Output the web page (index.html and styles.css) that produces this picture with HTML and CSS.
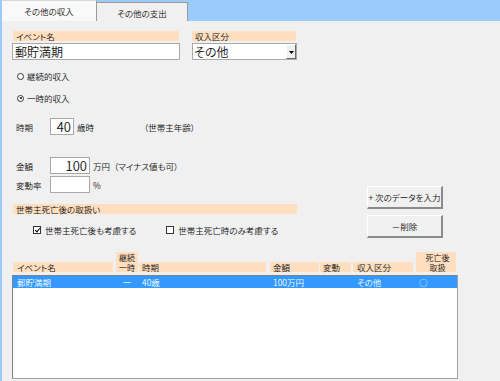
FILE: index.html
```html
<!DOCTYPE html>
<html lang="ja">
<head>
    <meta charset="UTF-8">
    <title>その他の収入</title>
    <link rel="stylesheet" href="styles.css">
</head>
<body>
    <div class="tabs">
        <div class="tab active">その他の収入</div>
        <div class="tab">その他の支出</div>
    </div>
    <div class="panel">
        <div class="head-row">
            <div class="field name">
                <div class="cap">イベント名</div>
                <div class="textbox">郵貯満期</div>
            </div>
            <div class="field kind">
                <div class="cap">収入区分</div>
                <div class="combo">
                    <span class="combo-text">その他</span>
                    <span class="combo-btn">
                        <svg width="5" height="4" viewBox="0 0 5 4"><path d="M0 1h5L2.5 4z" fill="#000"/></svg>
                    </span>
                </div>
            </div>
        </div>

        <div class="opt first"><span class="radio"></span>継続的収入</div>
        <div class="opt second"><span class="radio on"></span>一時的収入</div>

        <div class="row jiki">
            <span class="lbl">時期</span>
            <span class="num w24">40</span>
            <span class="unit">歳時</span>
            <span class="note">（世帯主年齢）</span>
        </div>

        <div class="mid">
            <div class="mid-left">
                <div class="row kingaku">
                    <span class="lbl">金額</span>
                    <span class="num w40">100</span>
                    <span class="unit">万円</span>
                    <span class="note2">（マイナス値も可）</span>
                </div>
                <div class="row hendo">
                    <span class="lbl">変動率</span>
                    <span class="num w40"></span>
                    <span class="unit">%</span>
                </div>
                <div class="bar">世帯主死亡後の取扱い</div>
                <div class="checks">
                    <span class="chk"><span class="box on"></span>世帯主死亡後も考慮する</span>
                    <span class="chk second"><span class="box"></span>世帯主死亡時のみ考慮する</span>
                </div>
            </div>
            <div class="mid-right">
                <div class="btn">+ 次のデータを入力</div>
                <div class="btn">－削除</div>
            </div>
        </div>

        <div class="list-head">
            <div class="c c1 hc">イベント名</div>
            <div class="c c2 hc tall">継続<br>一時</div>
            <div class="c c3 hc">時期</div>
            <div class="c c4 hc">金額</div>
            <div class="c c5 hc">変動</div>
            <div class="c c6 hc">収入区分</div>
            <div class="c c7 hc tall">死亡後<br>取扱</div>
        </div>
        <div class="list">
            <div class="item selected">
                <div class="c c1">郵貯満期</div>
                <div class="c c2 mid-c">一</div>
                <div class="c c3">40歳</div>
                <div class="c c4">100万円</div>
                <div class="c c5"></div>
                <div class="c c6">その他</div>
                <div class="c c7">○</div>
            </div>
        </div>
    </div>
</body>
</html>
```

FILE: styles.css
```css
* {
    box-sizing: border-box;
    margin: 0;
    padding: 0;
}
body {
    width: 500px;
    height: 381px;
    overflow: hidden;
    background-color: #9bcbfb;
    font-family: "Noto Sans CJK JP", sans-serif;
    font-size: 8.5px;
    font-weight: 350;
    color: #111;
    font-feature-settings: "palt";
}
.tabs {
    display: flex;
    align-items: flex-end;
    height: 21px;
    padding-left: 2px;
}
.tab {
    width: 91px;
    height: 19px;
    background-color: #f0f0f0;
    border: 1px solid #9a9a9a;
    border-bottom: none;
    border-left: none;
    display: flex;
    align-items: center;
    justify-content: center;
    padding-top: 1px;
}
.tab.active {
    width: 95px;
    height: 21px;
    background-color: #f9f9f9;
    border-top-color: #d8d8d8;
    padding-top: 0;
}
.panel {
    margin-left: 2px;
    height: 360px;
    background-color: #f0f0f0;
    padding: 10px 0 0 11px;
}
.head-row {
    display: flex;
    gap: 13px;
}
.name { width: 166px; }
.kind { width: 104px; }
.cap {
    height: 10px;
    line-height: 10px;
    background-color: #ffdfbf;
    padding-left: 3px;
}
.textbox {
    margin-top: 2px;
    margin-left: -1px;
    width: 168px;
    height: 17px;
    border: 1px solid #a9a9a9;
    background-color: #fff;
    font-size: 12px;
    line-height: 15px;
    padding-left: 2px;
}
.combo {
    margin-top: 2px;
    width: 105px;
    height: 17px;
    border: 1px solid #a9a9a9;
    background-color: #fff;
    display: flex;
}
.combo-text {
    flex: 1;
    font-size: 12px;
    line-height: 15px;
    padding-left: 1px;
}
.combo-btn {
    width: 10px;
    background-color: #f0f0f0;
    border-left: 1px solid #fff;
    border-top: 1px solid #fff;
    border-right: 1px solid #696969;
    border-bottom: 1px solid #696969;
    display: flex;
    align-items: center;
    justify-content: center;
}
.opt {
    display: flex;
    align-items: center;
    gap: 3px;
    height: 10px;
    padding-left: 4px;
}
.opt.first { margin-top: 11px; }
.opt.second { margin-top: 12px; }
.radio {
    width: 7px;
    height: 7px;
    border: 1px solid #333;
    border-radius: 50%;
    background-color: #fff;
    position: relative;
}
.radio.on::after {
    content: "";
    position: absolute;
    left: 1.5px;
    top: 1.5px;
    width: 2px;
    height: 2px;
    border-radius: 50%;
    background-color: #000;
}
.row {
    display: flex;
    align-items: center;
    height: 17px;
}
.row.jiki { margin-top: 15px; }
.lbl {
    width: 37px;
    padding-left: 3px;
}
.num {
    height: 17px;
    border: 1px solid #a9a9a9;
    background-color: #fff;
    text-align: right;
    font-size: 13px;
    line-height: 15px;
    padding-right: 2px;
}
.w24 { width: 24px; }
.w40 { width: 40px; }
.unit { margin-left: 3px; }
.note { margin-left: 50px; }
.note2 { margin-left: 4px; }
.mid {
    display: flex;
    margin-top: 22px;
}
.mid-left { width: 284px; }
.row.hendo { margin-top: 2px; }
.bar {
    margin-top: 11px;
    height: 10px;
    line-height: 10px;
    background-color: #ffdfbf;
    padding-left: 3px;
}
.checks {
    display: flex;
    margin-top: 11px;
    height: 10px;
    padding-left: 20px;
}
.chk {
    display: flex;
    align-items: center;
    gap: 4px;
}
.chk.second { margin-left: 30px; }
.box {
    width: 8px;
    height: 8px;
    border: 1px solid #333;
    background-color: #fff;
    position: relative;
}
.box.on::after {
    content: "";
    position: absolute;
    left: 1.5px;
    top: 0;
    width: 2px;
    height: 4px;
    border-right: 1px solid #000;
    border-bottom: 1px solid #000;
    transform: rotate(40deg);
}
.mid-right {
    margin-left: 70px;
    padding-top: 29px;
    display: flex;
    flex-direction: column;
    gap: 6px;
}
.btn {
    width: 76px;
    height: 23px;
    background-color: #f0f0f0;
    border-top: 1px solid #fff;
    border-left: 1px solid #fff;
    border-right: 2px solid #8a8a8a;
    border-bottom: 2px solid #8a8a8a;
    display: flex;
    align-items: center;
    justify-content: center;
}
.list-head {
    display: flex;
    align-items: flex-end;
    height: 20px;
    margin-top: 14px;
}
.hc {
    height: 10px;
    line-height: 10px;
    background-color: #ffdfbf;
}
.hc.tall {
    height: 20px;
    font-size: 8px;
    line-height: 9.5px;
    text-align: center;
    padding-top: 1px;
}
.c { flex: none; padding-left: 3px; }
.c1 { width: 100px; margin-right: 3px; padding-left: 4px; }
.c2 { width: 22px; margin-right: 1px; padding-left: 0; }
.c3 { width: 127px; margin-right: 4px; }
.c4 { width: 49px; margin-right: 1px; }
.c5 { width: 31px; margin-right: 2px; }
.c6 { width: 60px; margin-right: 3px; padding-left: 4px; }
.c7 { width: 40px; }
.list {
    margin-top: 3px;
    margin-left: -1px;
    width: 446px;
    height: 104px;
    background-color: #fff;
    border: 1px solid #a0a0a0;
    border-top-color: #828282;
    border-left-color: #828282;
}
.item {
    display: flex;
    height: 12px;
    line-height: 12px;
}
.item.selected {
    background-color: #3399ff;
    color: #fff;
}
.mid-c { text-align: center; }
```
